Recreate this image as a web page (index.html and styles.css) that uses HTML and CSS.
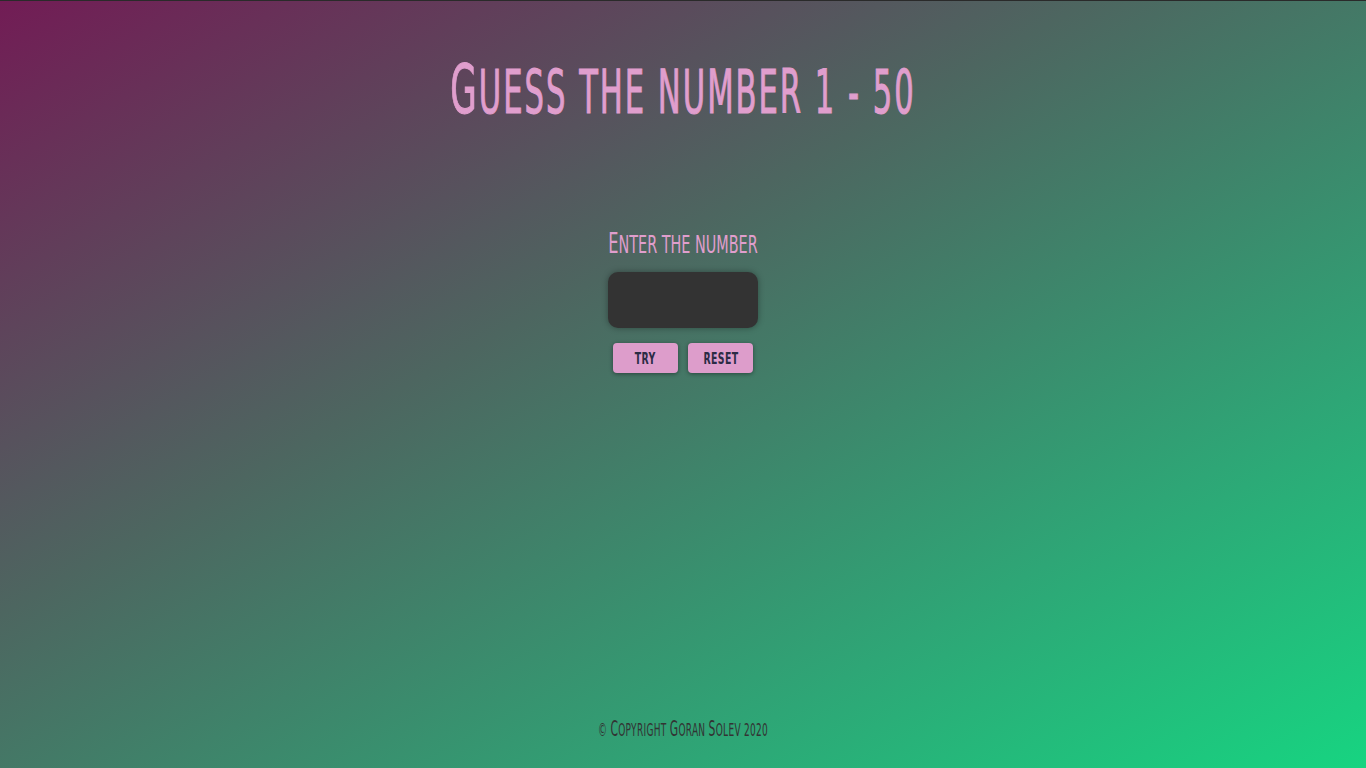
FILE: index.html
```html
<!DOCTYPE html>
<html lang="en">
<head>
<meta charset="utf-8">
<title>Guess the number</title>
<link rel="stylesheet" href="styles.css">
</head>
<body>
<main class="page">
  <h1 class="title">Guess the number 1 - 50</h1>
  <section class="game">
    <label class="label" for="guess">Enter the number</label>
    <input class="field" id="guess" type="text">
    <div class="actions">
      <button class="btn"><span class="btn-text">Try</span></button>
      <button class="btn"><span class="btn-text">Reset</span></button>
    </div>
  </section>
  <footer class="footer">&copy; <span class="cap">C</span>opyright <span class="cap">G</span>oran <span class="cap">S</span>olev 2020</footer>
</main>
</body>
</html>
```
FILE: styles.css
```css
* { box-sizing: border-box; }
html, body { margin: 0; padding: 0; height: 100%; }
body {
  border-top: 1px solid #2a2a2a;
  background: linear-gradient(to bottom right, #721c55 0%, #4d6660 40%, #2ea676 75%, #17d481 100%);
  font-family: "DejaVu Sans Condensed", "DejaVu Sans", sans-serif;
  font-stretch: condensed;
}
.page {
  height: 767px;
  display: flex;
  flex-direction: column;
  align-items: center;
}
.title {
  margin: 72px 0 0;
  font-size: 34px;
  line-height: 34px;
  font-weight: normal;
  color: #e09ecd;
  text-transform: uppercase;
  letter-spacing: 2px;
  transform: scaleY(1.8);
  -webkit-text-stroke: 0.6px #e09ecd;
}
.title::first-letter { font-size: 38px; }
.game {
  margin-top: 126px;
  display: flex;
  flex-direction: column;
  align-items: center;
}
.label {
  font-size: 16px;
  line-height: 20px;
  color: #e09ecd;
  text-transform: uppercase;
  transform: scaleY(1.6);
}
.label::first-letter { font-size: 18px; }
.field {
  margin-top: 17px;
  width: 150px;
  height: 56px;
  border: none;
  border-radius: 10px;
  background: #333333;
  box-shadow: 0 0 6px rgba(0,0,0,0.35);
  outline: none;
}
.actions {
  margin-top: 15px;
  display: flex;
  gap: 10px;
}
.btn {
  width: 65px;
  height: 30px;
  padding: 0;
  border: none;
  border-radius: 4px;
  background: #dd9dcb;
  color: #2b2b45;
  font-family: inherit;
  font-size: 13px;
  box-shadow: 0 1px 4px rgba(0,0,0,0.4);
  display: flex;
  align-items: center;
  justify-content: center;
}
.btn-text {
  display: inline-block;
  text-transform: uppercase;
  font-weight: bold;
  letter-spacing: 0.5px;
  transform: scale(0.8, 1.25);
}
.footer {
  margin-top: auto;
  margin-bottom: 32px;
  font-size: 10px;
  letter-spacing: 0.3px;
  color: #333333;
  text-transform: uppercase;
  transform: scaleY(1.7);
}
.footer .cap { font-size: 12px; }
```
